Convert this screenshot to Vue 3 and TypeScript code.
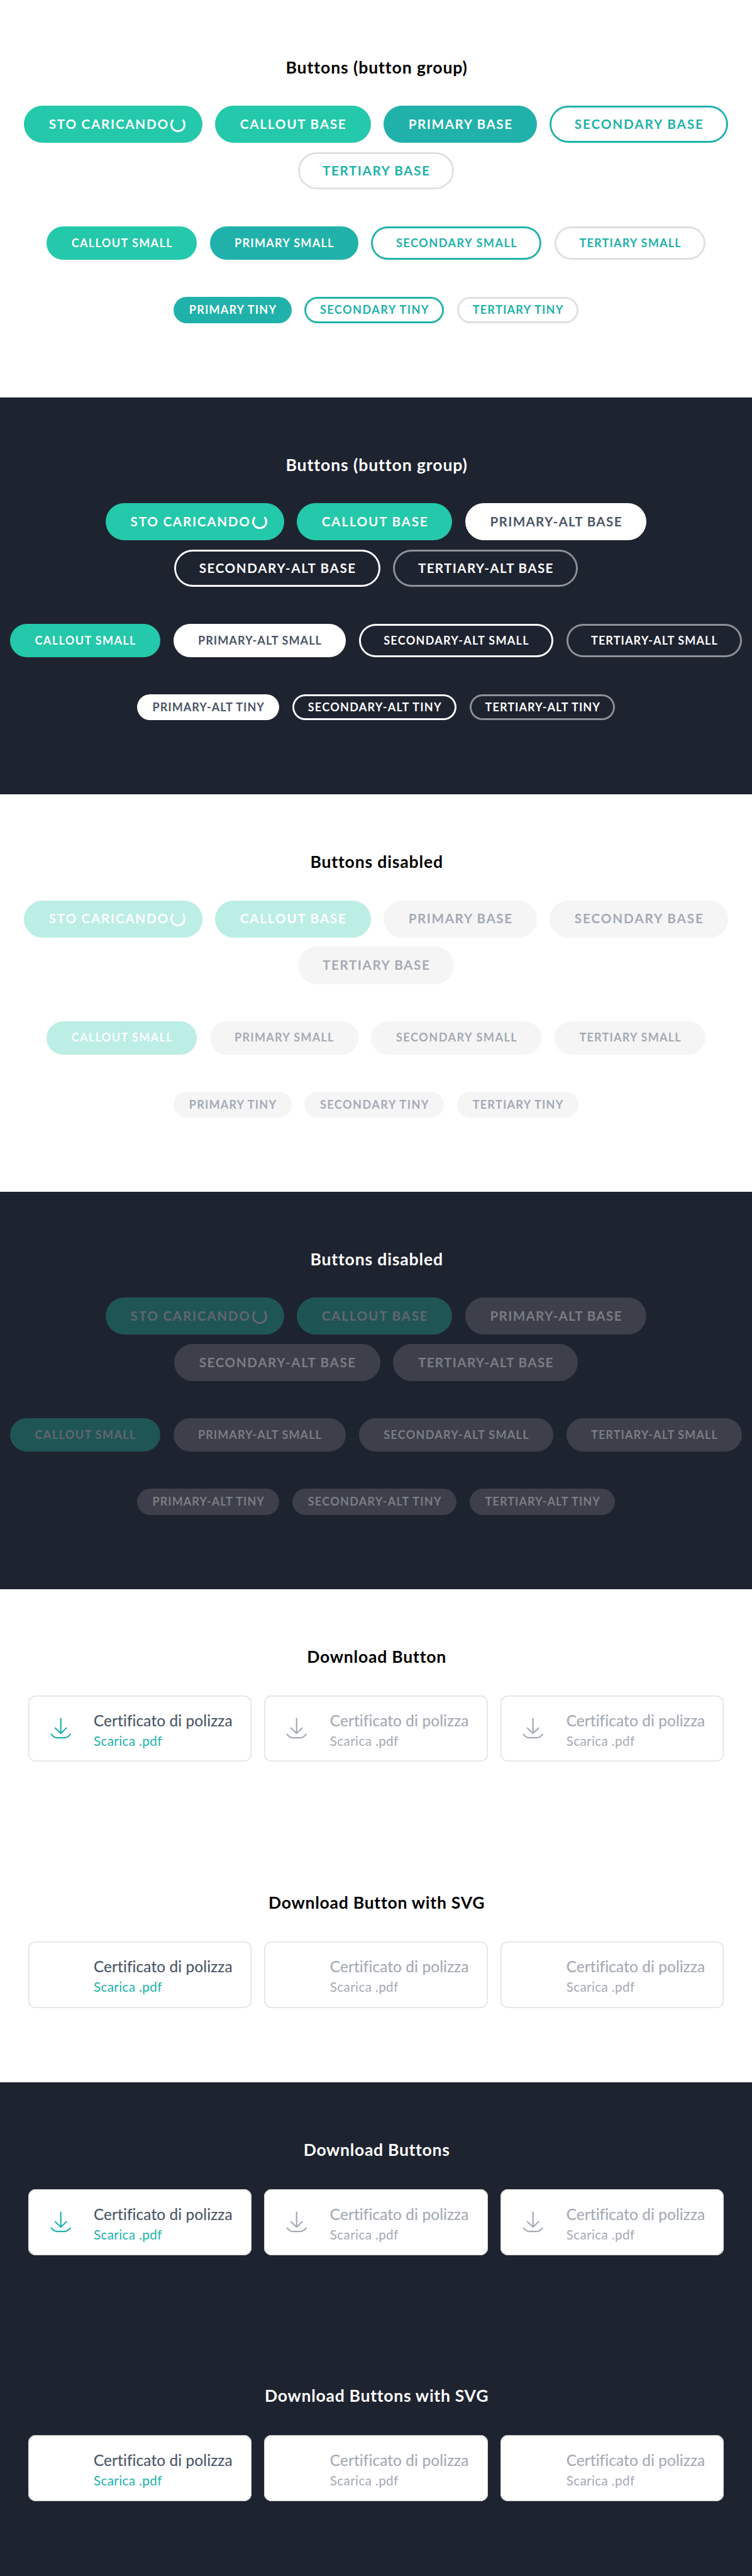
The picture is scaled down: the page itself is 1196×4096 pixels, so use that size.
<script setup lang="ts">
import type { Directive } from 'vue'

interface Btn {
  label: string
  kind: string
  /** outer width, in design units */
  w: number
  loading?: boolean
}
interface Group {
  size: 'base' | 'small' | 'tiny'
  items: Btn[]
}
interface ButtonSection {
  title: string
  titleWidth: number
  dark: boolean
  disabled: boolean
  groups: Group[]
}
interface DownloadBlock {
  title: string
  titleWidth: number
  icon: boolean
}
interface DownloadSection {
  dark: boolean
  blocks: DownloadBlock[]
}

const UNIT = 0.738

const b = (label: string, kind: string, w: number, loading = false): Btn => ({ label, kind, w, loading })

const lightGroups: Group[] = [
  {
    size: 'base',
    items: [
      b('Sto caricando', 'callout', 384, true),
      b('Callout base', 'callout', 335),
      b('Primary base', 'primary', 330),
      b('Secondary base', 'secondary', 384),
      b('Tertiary base', 'tertiary', 337),
    ],
  },
  {
    size: 'small',
    items: [
      b('Callout small', 'callout', 323.5),
      b('Primary small', 'primary', 320),
      b('Secondary small', 'secondary', 367),
      b('Tertiary small', 'tertiary', 325),
    ],
  },
  {
    size: 'tiny',
    items: [
      b('Primary tiny', 'primary', 254),
      b('Secondary tiny', 'secondary', 301),
      b('Tertiary tiny', 'tertiary', 261.5),
    ],
  },
]

const darkGroups: Group[] = [
  {
    size: 'base',
    items: [
      b('Sto caricando', 'callout', 384, true),
      b('Callout base', 'callout', 335),
      b('Primary-alt base', 'primary-alt', 390),
      b('Secondary-alt base', 'secondary-alt', 444),
      b('Tertiary-alt base', 'tertiary-alt', 397.5),
    ],
  },
  {
    size: 'small',
    items: [
      b('Callout small', 'callout', 323.5),
      b('Primary-alt small', 'primary-alt', 372),
      b('Secondary-alt small', 'secondary-alt', 419),
      b('Tertiary-alt small', 'tertiary-alt', 378.5),
    ],
  },
  {
    size: 'tiny',
    items: [
      b('Primary-alt tiny', 'primary-alt', 307),
      b('Secondary-alt tiny', 'secondary-alt', 354),
      b('Tertiary-alt tiny', 'tertiary-alt', 313.5),
    ],
  },
]

const sections: ButtonSection[] = [
  { title: 'Buttons (button group)', titleWidth: 389, dark: false, disabled: false, groups: lightGroups },
  { title: 'Buttons (button group)', titleWidth: 389, dark: true, disabled: false, groups: darkGroups },
  { title: 'Buttons disabled', titleWidth: 285, dark: false, disabled: true, groups: lightGroups },
  { title: 'Buttons disabled', titleWidth: 285, dark: true, disabled: true, groups: darkGroups },
]

const downloads: DownloadSection[] = [
  {
    dark: false,
    blocks: [
      { title: 'Download Button', titleWidth: 299, icon: true },
      { title: 'Download Button with SVG', titleWidth: 465, icon: false },
    ],
  },
  {
    dark: true,
    blocks: [
      { title: 'Download Buttons', titleWidth: 314, icon: true },
      { title: 'Download Buttons with SVG', titleWidth: 481, icon: false },
    ],
  },
]

const cards = [false, true, true]

function labelWidth(item: Btn, size: Group['size']): number {
  if (item.loading) return 259
  return item.w - (size === 'tiny' ? 65 : 105)
}

/** Tracks a line of text so that its advance equals the given design width. */
const vTrack: Directive<HTMLElement, number> = {
  mounted(el, { value }) {
    el.style.letterSpacing = '0px'
    const natural = el.getBoundingClientRect().width
    const count = (el.textContent ?? '').trim().length
    el.style.letterSpacing = `${(value * UNIT - natural) / count}px`
  },
}
</script>

<template>
  <main class="page">
    <section v-for="(s, i) in sections" :key="i" class="section" :class="{ dark: s.dark, disabled: s.disabled }">
      <h2 class="title"><span v-track="s.titleWidth">{{ s.title }}</span></h2>
      <div v-for="g in s.groups" :key="g.size" class="group" :class="g.size">
        <button
          v-for="item in g.items"
          :key="item.label"
          class="btn"
          :class="[item.kind, { loading: item.loading }]"
          :style="{ width: item.w * UNIT + 'px' }"
          :disabled="s.disabled"
        >
          <span v-track="labelWidth(item, g.size)" class="label">{{ item.label.toUpperCase() }}</span>
          <i v-if="item.loading" class="spinner"></i>
        </button>
      </div>
    </section>

    <section v-for="(s, i) in downloads" :key="'d' + i" class="section download" :class="{ dark: s.dark }">
      <div v-for="block in s.blocks" :key="block.title" class="block">
        <h2 class="title"><span v-track="block.titleWidth">{{ block.title }}</span></h2>
        <div class="cards">
          <a v-for="(off, c) in cards" :key="c" class="card" :class="{ off }">
            <span class="icon">
              <svg v-if="block.icon" viewBox="0 0 48 48" fill="none" stroke="currentColor" stroke-width="3" stroke-linecap="round" stroke-linejoin="round">
                <path d="M24 3.500V35.500M12 24L24 35.500L36 24" />
                <path d="M3.500 37.500C7 42 10 45 15.500 45H32.500C38 45 41 42 44.500 37.500" />
              </svg>
            </span>
            <span class="texts">
              <span class="name"><span v-track="299">Certificato di polizza</span></span>
              <span class="action"><span v-track="147.5">Scarica .pdf</span></span>
            </span>
          </a>
        </div>
      </div>
    </section>
  </main>
</template>

<style>
body {
  margin: 0;
  background: #fff;
}
</style>

<style scoped>
.page {
  --u: 0.738px;
  width: 1196px;
  height: 4096px;
  overflow: hidden;
  display: flex;
  flex-direction: column;
  font-family: Lato, 'Liberation Sans', sans-serif;
}
.section {
  box-sizing: border-box;
  height: calc(856 * var(--u));
  flex: none;
  color: #000;
  background: #fff;
}
.section.dark {
  background: #1e2330;
  color: #fff;
}
.section.download {
  height: calc(1063 * var(--u));
}
.download.dark {
  flex: 1 0 auto;
}
.title {
  margin: 0;
  padding: calc(126 * var(--u)) 0 calc(62 * var(--u)) calc(3 * var(--u));
  font-size: calc(36 * var(--u));
  line-height: calc(40 * var(--u));
  font-weight: 700;
  text-align: center;
  white-space: nowrap;
}
.download .title {
  padding-bottom: calc(63.5 * var(--u));
}
.title span,
.name span,
.action span {
  display: inline-block;
}
.group {
  display: flex;
  flex-wrap: wrap;
  justify-content: center;
  gap: calc(20 * var(--u)) calc(28 * var(--u));
  margin-bottom: calc(80 * var(--u));
}
.btn {
  box-sizing: border-box;
  display: flex;
  align-items: center;
  border: 0;
  margin: 0;
  height: calc(80 * var(--u));
  padding: 0 0 calc(1 * var(--u)) calc(53.5 * var(--u));
  border-radius: calc(40 * var(--u));
  font: 700 calc(28 * var(--u)) / 1.2 Lato, 'Liberation Sans', sans-serif;
  white-space: nowrap;
}
.small .btn {
  height: calc(72 * var(--u));
  font-size: calc(24.5 * var(--u));
  padding-bottom: 0;
}
.tiny .btn {
  height: calc(56 * var(--u));
  font-size: calc(24.5 * var(--u));
  padding-left: calc(33.5 * var(--u));
  padding-bottom: 0;
}
.label {
  flex: none;
}
.spinner {
  flex: none;
  box-sizing: border-box;
  width: calc(32 * var(--u));
  height: calc(32 * var(--u));
  margin: calc(1 * var(--u)) 0 0 calc(3.5 * var(--u));
  border: 3px solid currentColor;
  border-top-color: transparent;
  border-radius: 50%;
}
.callout {
  background: #24c8aa;
  color: #fff;
}
.primary {
  background: #20b2aa;
  color: #fff;
}
.secondary {
  background: #fff;
  color: #20b2aa;
  box-shadow: inset 0 0 0 calc(4 * var(--u)) #20b2aa;
}
.tertiary {
  background: #fff;
  color: #20b2aa;
  box-shadow: inset 0 0 0 calc(4 * var(--u)) #e0e0e0;
}
.primary-alt {
  background: #fff;
  color: #4a5568;
}
.secondary-alt {
  background: transparent;
  color: #fff;
  box-shadow: inset 0 0 0 calc(4 * var(--u)) #fff;
}
.tertiary-alt {
  background: transparent;
  color: #fff;
  box-shadow: inset 0 0 0 calc(4 * var(--u)) #8e9197;
}
.disabled .btn {
  box-shadow: none;
}
.disabled .btn.callout {
  opacity: 0.3;
}
.disabled .btn:not(.callout) {
  background: #f5f5f5;
  color: #a4aab3;
}
.disabled.dark .btn:not(.callout) {
  background: #3d404b;
  color: #7b7d83;
}
.block {
  height: calc(530 * var(--u));
}
.cards {
  display: flex;
  justify-content: center;
  gap: calc(28 * var(--u));
}
.card {
  box-sizing: border-box;
  display: flex;
  width: calc(481.3 * var(--u));
  height: calc(142.6 * var(--u));
  padding: calc(36 * var(--u)) 0 0 calc(46 * var(--u));
  border-radius: calc(16 * var(--u));
  background: #fff;
  box-shadow: inset 0 0 0 calc(2 * var(--u)) #e0e0e0;
  color: #20b2aa;
}
.icon {
  flex: none;
  width: calc(48 * var(--u));
  height: calc(48 * var(--u));
  margin: calc(10 * var(--u)) calc(47.5 * var(--u)) 0 0;
}
.icon svg {
  display: block;
  width: 100%;
  height: 100%;
}
.texts {
  display: flex;
  flex-direction: column;
  white-space: nowrap;
}
.name {
  font-size: calc(33 * var(--u));
  line-height: calc(40 * var(--u));
  height: calc(40 * var(--u));
  margin-top: calc(-2 * var(--u));
  font-weight: 400;
  -webkit-text-stroke: 0.2px currentColor;
  color: #4a5568;
}
.action {
  font-size: calc(28 * var(--u));
  line-height: calc(40 * var(--u));
  margin-top: calc(4.500 * var(--u));
}
.card.off,
.card.off .name {
  color: #a4aab3;
}
</style>
